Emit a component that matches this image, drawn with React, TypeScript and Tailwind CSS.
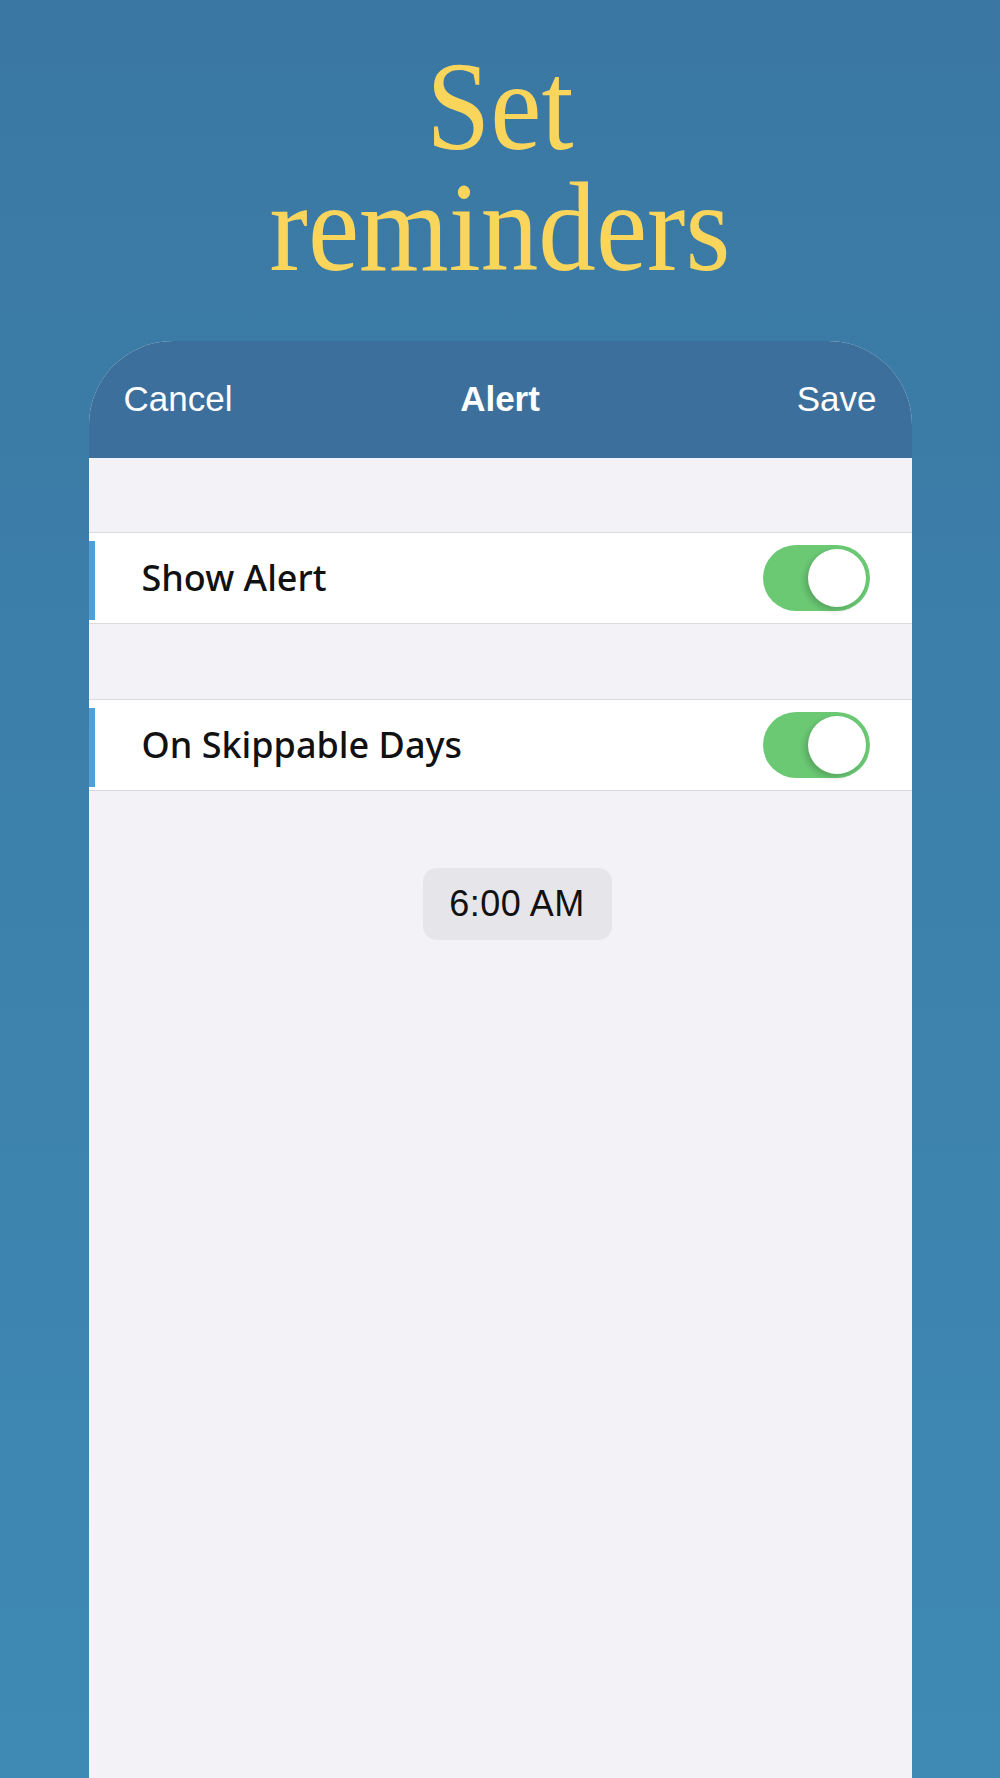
const rows = [
  { id: 1, label: "Show Alert", on: true },
  { id: 2, label: "On Skippable Days", on: true },
];

function Toggle({ on }: { on: boolean }) {
  return (
    <div
      className={`ml-auto mr-[42px] flex h-[66px] w-[107px] shrink-0 items-center rounded-full p-[4px] ${
        on ? "justify-end bg-[#6bc974]" : "justify-start bg-[#e5e5ea]"
      }`}
    >
      <div className="h-[58px] w-[58px] rounded-full bg-white shadow-[-3px_3px_6px_rgba(0,0,0,0.18)]" />
    </div>
  );
}

export default function App() {
  return (
    <main className="flex h-[1778px] w-full flex-col items-center overflow-hidden bg-gradient-to-b from-[#3a78a3] to-[#3e8ab5]">
      <h1 className="mt-[46px] scale-x-90 text-center font-['Liberation_Serif',serif] text-[128px] leading-[121px] text-[#fad55c]">
        Set
        <br />
        reminders
      </h1>

      <div className="mt-[53px] flex w-[823px] flex-1 flex-col overflow-hidden rounded-t-[84px] bg-[#f2f2f7]">
        <div className="grid h-[117px] shrink-0 grid-cols-3 items-center bg-[#3c6f9c] px-[35px] font-['Liberation_Sans',sans-serif] text-[35px] text-white">
          <span className="text-left">Cancel</span>
          <span className="text-center font-bold">Alert</span>
          <span className="text-right">Save</span>
        </div>

        {rows.map((row, i) => (
          <div
            key={row.id}
            className={`flex h-[92px] items-center border-y border-[#d9d9de] bg-white ${
              i === 0 ? "mt-[74px]" : "mt-[75px]"
            }`}
          >
            <div className="mb-[3px] mt-[8px] w-[6px] self-stretch bg-[#4ea1d8]" />
            <span className="ml-[47px] font-['Noto_Sans',sans-serif] text-[36px] font-medium text-[#111]">
              {row.label}
            </span>
            <Toggle on={row.on} />
          </div>
        ))}

        <div className="ml-[334px] mt-[77px] flex h-[72px] w-[189px] items-center justify-center rounded-[14px] bg-[#e5e5ea] font-['Liberation_Sans',sans-serif] text-[36px] tracking-[0.5px] text-[#111]">
          6:00 AM
        </div>
      </div>
    </main>
  );
}
